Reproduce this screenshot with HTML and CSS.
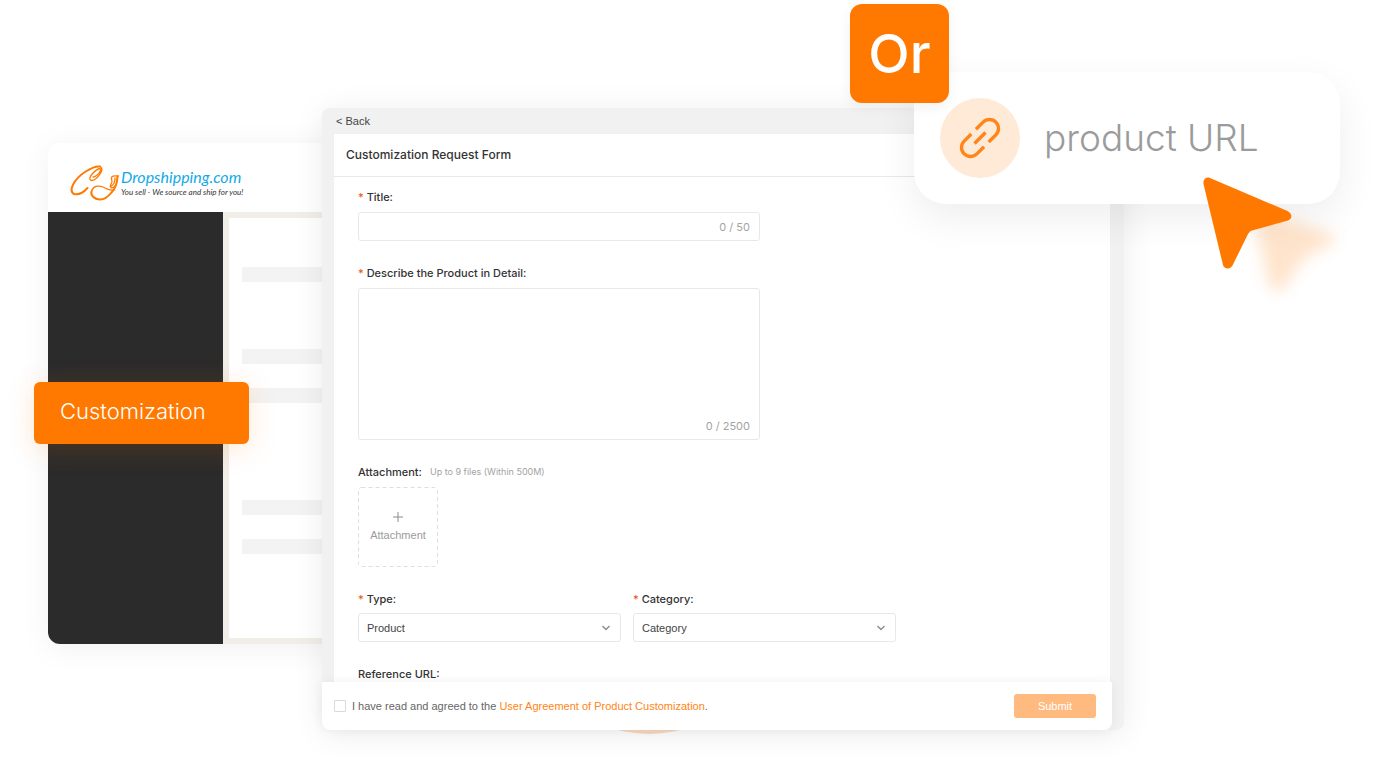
FILE: index.html
```html
<!DOCTYPE html>
<html lang="en">
<head>
<meta charset="utf-8">
<meta name="viewport" content="width=device-width, initial-scale=1">
<title>Customization Request Form</title>
<link rel="stylesheet" href="styles.css">
</head>
<body>
<main class="stage">
  <section class="dashboard" aria-label="Dashboard">
    <header class="brand">
      <svg class="brand-mark" viewBox="0 0 52 38" aria-hidden="true">
        <path class="thick" d="M18.500 24C14 29 9 31 5 30C-1 27 5 15 16 8C22 4 27 2 31 2.500"/>
        <path d="M31 2.500C37 5 27 17 22 16.500C18 15 25 6 31 4.500C34 6 27 13 24 13"/>
        <path class="thick" d="M48.500 13C48 21 46 25 42.500 28.500C39 33 35 35.500 31 35.500C25 35.500 21.500 31 22.500 27.500"/>
        <path d="M22.500 27.500C24 22 29 21 34 23C38 25 41 27 45 26M49.500 12C45 11.500 42 12 42.500 15C43 17 44 18 42 20C40 24 43 25 46 22C48 20 48 16 48.500 13M46 14C46 17 45.500 20 42.500 22"/>
      </svg>
      <div class="brand-text">
        <span class="brand-name">Dropshipping.com</span>
        <span class="brand-tagline">You sell - We source and ship for you!</span>
      </div>
    </header>
    <div class="dashboard-body">
      <div class="sidebar"></div>
      <div class="skeleton">
        <div class="bar-group"><div class="bar"></div></div>
        <div class="bar-group"><div class="bar"></div><div class="bar"></div></div>
        <div class="bar-group last"><div class="bar"></div><div class="bar"></div></div>
      </div>
    </div>
  </section>

  <button class="menu-item" type="button">Customization</button>

  <div class="glow"></div>

  <form class="window">
    <a class="back" href="#">&lt; Back</a>
    <div class="panel">
      <h1 class="panel-title">Customization Request Form</h1>
      <div class="fields">
        <div class="field">
          <label class="label required" for="title">Title:</label>
          <div class="box">
            <input class="control" id="title" type="text" maxlength="50">
            <span class="count">0 / 50</span>
          </div>
        </div>
        <div class="field">
          <label class="label required" for="detail">Describe the Product in Detail:</label>
          <div class="box tall">
            <textarea class="control" id="detail" maxlength="2500"></textarea>
            <span class="count">0 / 2500</span>
          </div>
        </div>
        <div class="field">
          <div class="label-row">
            <span class="label" id="attach-label">Attachment:</span>
            <span class="hint">Up to 9 files (Within 500M)</span>
          </div>
          <button class="upload" type="button" aria-describedby="attach-label">
            <svg class="dash" aria-hidden="true"><rect x="0.5" y="0.5" width="79" height="79" rx="3"/></svg>
            <svg class="plus" viewBox="0 0 12 12" aria-hidden="true"><path d="M6 1V11M1 6H11"/></svg>
            Attachment
          </button>
        </div>
        <div class="pair">
          <div class="field">
            <label class="label required" for="type">Type:</label>
            <div class="picker">
              <select class="select" id="type"><option>Product</option></select>
              <svg class="chevron" viewBox="0 0 10 6" aria-hidden="true"><path d="M1.500 1L5 4.500L8.500 1"/></svg>
            </div>
          </div>
          <div class="field">
            <label class="label required" for="category">Category:</label>
            <div class="picker">
              <select class="select" id="category"><option>Category</option></select>
              <svg class="chevron" viewBox="0 0 10 6" aria-hidden="true"><path d="M1.500 1L5 4.500L8.500 1"/></svg>
            </div>
          </div>
        </div>
        <span class="label">Reference URL:</span>
      </div>
    </div>
    <footer class="actions">
      <input class="tick" id="agree" type="checkbox">
      <label class="agree" for="agree">I have read and agreed to the <a class="terms" href="#">User Agreement of Product Customization</a>.</label>
      <button class="submit" type="submit">Submit</button>
    </footer>
  </form>

  <div class="url-card">
    <span class="link-icon">
      <svg viewBox="-20 -20 40 40" aria-hidden="true">
        <g transform="rotate(-45)">
          <path d="M3.300 -9H13.400A9 9 0 0 1 13.400 9H3.300M-3.300 -9H-13.400A9 9 0 0 0 -13.400 9H-3.300M-7.800 0H7.800"/>
        </g>
      </svg>
    </span>
    <span class="url-text">product URL</span>
  </div>
  <span class="or-badge">Or</span>
  <svg class="pointer" viewBox="0 0 150 130" aria-hidden="true">
    <defs>
      <filter id="soft" x="-50%" y="-50%" width="200%" height="200%"><feGaussianBlur stdDeviation="8"/></filter>
    </defs>
    <path class="pointer-shadow" filter="url(#soft)" d="M52 32L132 58C138 62 136 66 130 69L104 82L84 112C79 118 72 116 69 109Z"/>
    <path class="pointer-body" d="M10 2L87.500 35C93 38 92 43 88 44.500L52 54.500C50 55 49 56.500 48 58L32.500 89.500C30 94 24 93 23 89L3.500 8C3 3.500 6 0.500 10 2Z"/>
  </svg>
</main>
</body>
</html>
```
FILE: styles.css
```css
* { box-sizing: border-box; }

body {
  margin: 0;
  background: #fff;
  color: #444;
  font-family: "Liberation Sans", Arial, sans-serif;
  font-size: 11px;
  line-height: 16px;
}

button, input, select, textarea { font: inherit; color: inherit; }

a { color: inherit; text-decoration: none; }

.stage {
  position: relative;
  min-height: 100vh;
  padding: 108px 266px 50px 322px;
  overflow: hidden;
}

/* Dashboard behind the form */
.dashboard {
  position: absolute;
  top: 143px;
  left: 48px;
  width: 480px;
  border-radius: 12px;
  overflow: hidden;
  background: #fff;
  box-shadow: 0 4px 32px rgba(0, 0, 0, 0.06);
}

.brand {
  display: flex;
  align-items: center;
  height: 69px;
  padding: 10px 21px 0;
}

.brand-mark {
  width: 52px;
  height: 38px;
  fill: none;
  stroke: #ff7a00;
  stroke-width: 1.300;
  stroke-linecap: round;
}

.brand-mark .thick { stroke-width: 2; }

.brand-text {
  display: flex;
  flex-direction: column;
  font-family: Lato, sans-serif;
  font-style: italic;
  white-space: nowrap;
}

.brand-name { color: #12a9e8; font-size: 16px; line-height: 18px; }
.brand-tagline { color: #333; font-size: 8px; line-height: 12px; }

.dashboard-body { display: flex; min-height: 432px; }

.sidebar { width: 175px; background: #2b2b2b; }

.skeleton {
  flex: 1;
  border: 6px solid #f1ede7;
  padding: 49px 0 84px 13px;
}

.bar-group { display: grid; gap: 24px; margin-bottom: 67px; }
.bar-group + .bar-group { margin-bottom: 97px; }
.bar-group.last { margin-bottom: 0; }
.bar { height: 15px; background: #f3f3f3; }

.menu-item {
  position: absolute;
  top: 382px;
  left: 34px;
  width: 215px;
  height: 62px;
  padding: 0 26px 4px;
  border: 0;
  border-radius: 6px;
  background: #ff7800;
  box-shadow: 0 4px 28px rgba(255, 120, 0, 0.18);
  color: #fff;
  font-family: Inter, sans-serif;
  font-size: 22px;
  font-weight: 300;
  text-align: left;
}

.glow {
  position: absolute;
  top: 484px;
  left: 524px;
  width: 250px;
  height: 250px;
  border-radius: 50%;
  background: #fbdcc2;
}

/* Form window */
.window {
  position: relative;
  display: flex;
  flex-direction: column;
  border-radius: 8px;
  background: #f1f1f1;
  box-shadow: 0 4px 32px rgba(0, 0, 0, 0.08);
}

.back {
  height: 26px;
  padding-left: 14px;
  line-height: 26px;
}

.panel { margin: 0 14px 0 12px; background: #fff; }

.panel-title {
  margin: 0;
  padding: 0 12px;
  border-bottom: 1px solid #e8e8e8;
  color: #333;
  font-family: Inter, sans-serif;
  font-size: 12px;
  font-weight: 500;
  line-height: 42px;
}

.fields {
  display: flex;
  flex-direction: column;
  gap: 24px;
  padding: 12px 24px 0;
}

.field { display: flex; flex-direction: column; gap: 7px; }

.label { color: #333; font-family: Inter, sans-serif; font-weight: 500; }
.required::before { content: "* "; color: #e8541e; }

.label-row { display: flex; gap: 8px; }
.hint { color: #a3a3a3; font-family: Inter, sans-serif; font-size: 9px; }

.box {
  display: flex;
  align-items: center;
  width: 100%;
  max-width: 402px;
  height: 29px;
  padding: 0 9px;
  border: 1px solid #e8e8e8;
  border-radius: 3px;
}

.box.tall { height: 152px; align-items: flex-end; padding-bottom: 5px; }

.control {
  flex: 1;
  min-width: 0;
  height: 100%;
  padding: 0;
  border: 0;
  outline: 0;
  background: none;
  resize: none;
}

.count { color: #a3a3a3; font-family: Inter, sans-serif; }

.upload {
  position: relative;
  display: flex;
  flex-direction: column;
  align-items: center;
  gap: 4px;
  width: 80px;
  height: 80px;
  padding: 24px 0 0;
  border: 0;
  background: none;
  color: #9b9b9b;
  line-height: 16px;
}

.dash {
  position: absolute;
  inset: 0;
  width: 80px;
  height: 80px;
  fill: none;
  stroke: #dedede;
  stroke-dasharray: 4 3;
}

.plus { width: 12px; height: 12px; fill: none; stroke: #8c8c8c; }

.pair { display: flex; gap: 12px; }
.pair .field { width: 263px; gap: 6px; }

.picker { position: relative; display: flex; }

.select {
  width: 100%;
  height: 29px;
  padding: 0 8px;
  border: 1px solid #e8e8e8;
  border-radius: 3px;
  background: #fff;
  appearance: none;
}

.chevron {
  position: absolute;
  top: 12px;
  right: 10px;
  width: 10px;
  height: 6px;
  fill: none;
  stroke: #8c8c8c;
  stroke-width: 1.400;
  pointer-events: none;
}

.actions {
  position: relative;
  display: flex;
  align-items: center;
  gap: 6px;
  height: 48px;
  margin-right: 12px;
  padding: 0 16px 0 12px;
  border-radius: 0 0 8px 8px;
  background: #fff;
  box-shadow: 0 0 12px rgba(0, 0, 0, 0.06);
}

.tick {
  width: 12px;
  height: 12px;
  margin: 0;
  border: 1px solid #d9d9d9;
  border-radius: 1px;
  background: #fff;
  appearance: none;
}

.agree { color: #666; }
.terms { color: #ff8514; }

.submit {
  width: 82px;
  height: 24px;
  margin-left: auto;
  padding: 0;
  border: 0;
  border-radius: 3px;
  background: #ffba80;
  color: #fff;
}

/* Floating product link */
.url-card {
  position: absolute;
  top: 72px;
  right: 50px;
  display: flex;
  align-items: center;
  gap: 24px;
  width: 426px;
  height: 132px;
  padding: 0 26px;
  border-radius: 32px;
  background: #fff;
  box-shadow: 0 14px 40px rgba(0, 0, 0, 0.07);
}

.link-icon {
  display: grid;
  place-items: center;
  width: 80px;
  height: 80px;
  border-radius: 50%;
  background: #ffead8;
}

.link-icon svg {
  width: 40px;
  height: 40px;
  overflow: visible;
  fill: none;
  stroke: #ff8519;
  stroke-width: 3.400;
}

.url-text {
  color: #9b9b9b;
  font-family: Inter, sans-serif;
  font-size: 37px;
  font-weight: 300;
  line-height: 44px;
}

.or-badge {
  position: absolute;
  top: 4px;
  right: 441px;
  width: 99px;
  height: 99px;
  border-radius: 12px;
  background: #ff7800;
  box-shadow: 0 4px 14px rgba(0, 0, 0, 0.06);
  color: #fff;
  font-family: Inter, sans-serif;
  font-size: 54px;
  font-weight: 500;
  line-height: 99px;
  text-align: center;
}

.pointer {
  position: absolute;
  top: 176px;
  right: 40px;
  width: 150px;
  height: 130px;
  overflow: visible;
}

.pointer-body { fill: #ff7800; }
.pointer-shadow { fill: #ff7800; opacity: 0.200; }
```
